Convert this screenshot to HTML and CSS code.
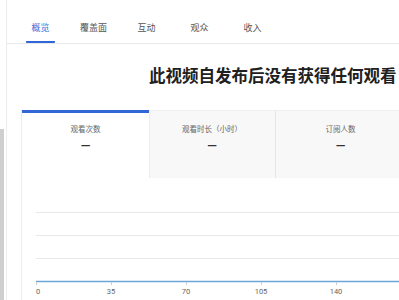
FILE: index.html
```html
<!DOCTYPE html>
<html lang="zh-CN">
<head>
<meta charset="utf-8">
<link rel="stylesheet" href="styles.css">
</head>
<body>
<div class="page">
  <div class="rail">
    <div class="rail-space"></div>
    <div class="rail-thumb"></div>
  </div>
  <div class="main">
    <nav class="tabs">
      <div class="tab active"><span class="tab-label">概览</span></div>
      <div class="tab"><span class="tab-label">覆盖面</span></div>
      <div class="tab"><span class="tab-label">互动</span></div>
      <div class="tab"><span class="tab-label">观众</span></div>
      <div class="tab"><span class="tab-label">收入</span></div>
    </nav>
    <h1 class="headline">此视频自发布后没有获得任何观看</h1>
    <section class="card">
      <div class="metrics">
        <div class="metric selected">
          <div class="metric-label">观看次数</div>
          <div class="metric-value">—</div>
        </div>
        <div class="metric">
          <div class="metric-label">观看时长（小时）</div>
          <div class="metric-value">—</div>
        </div>
        <div class="metric divided">
          <div class="metric-label">订阅人数</div>
          <div class="metric-value">—</div>
        </div>
      </div>
      <svg class="chart" width="380" height="122" viewBox="0 0 380 122">
        <line x1="0" y1="34.5" x2="380" y2="34.5" class="grid"/>
        <line x1="0" y1="57.5" x2="380" y2="57.5" class="grid"/>
        <line x1="0" y1="80.5" x2="380" y2="80.5" class="grid"/>
        <line x1="0" y1="103.5" x2="380" y2="103.5" class="base"/>
        <line x1="0.5" y1="104" x2="0.5" y2="107" class="tick"/>
        <line x1="75.5" y1="104" x2="75.5" y2="107" class="tick"/>
        <line x1="150.5" y1="104" x2="150.5" y2="107" class="tick"/>
        <line x1="225.5" y1="104" x2="225.5" y2="107" class="tick"/>
        <line x1="300.5" y1="104" x2="300.5" y2="107" class="tick"/>
        <text x="0" y="116" class="axis">0</text>
        <text x="75" y="116" class="axis mid">35</text>
        <text x="150" y="116" class="axis mid">70</text>
        <text x="225" y="116" class="axis mid">105</text>
        <text x="300" y="116" class="axis mid">140</text>
      </svg>
    </section>
  </div>
</div>
</body>
</html>
```
FILE: styles.css
```css
html, body {
  margin: 0;
  padding: 0;
  background: #ffffff;
}
body {
  width: 399px;
  height: 300px;
  overflow: hidden;
  font-family: "Noto Sans CJK SC", "Noto Sans", Roboto, sans-serif;
  color: #212121;
}
.page {
  display: flex;
  height: 300px;
}
.rail {
  width: 6px;
  flex: none;
  border-right: 1px solid #ececec;
  display: flex;
  flex-direction: column;
}
.rail-space {
  height: 129px;
  flex: none;
}
.rail-thumb {
  flex: 1;
  width: 4px;
  background: #cfcfcf;
}
.main {
  flex: 1;
  min-width: 0;
  overflow: hidden;
}
.tabs {
  display: flex;
  height: 43px;
  padding-left: 7px;
  border-bottom: 1px solid #e9e9e9;
  box-sizing: content-box;
}
.tab {
  width: 53px;
  display: flex;
  justify-content: center;
  padding-top: 20px;
  box-sizing: border-box;
}
.tab-label {
  display: block;
  height: 23px;
  box-sizing: border-box;
  padding: 0 5px;
  font-size: 9px;
  line-height: 16px;
  color: #555555;
  border-bottom: 2px solid transparent;
}
.tab.active .tab-label {
  color: #3a6fd6;
  border-bottom-color: #2f66d9;
  border-radius: 1px;
}
.headline {
  margin: 21px 0 0 0;
  padding-left: 142px;
  font-size: 16.5px;
  line-height: 20px;
  font-weight: 700;
  white-space: nowrap;
  color: #202020;
}
.card {
  margin: 25px 0 0 14px;
  border-left: 1px solid #ececec;
  height: 190px;
  width: 400px;
}
.metrics {
  display: flex;
  height: 68px;
}
.metric {
  width: 126px;
  flex: none;
  box-sizing: border-box;
  background: #f8f8f8;
  border-top: 1px solid #efefef;
  padding-top: 13px;
  text-align: center;
}
.metric.selected {
  width: 127px;
  background: #ffffff;
  border-top: 3px solid #3367d6;
  padding-top: 11px;
  box-shadow: 1px 0 1px rgba(0,0,0,0.04);
  position: relative;
  z-index: 1;
}
.metric.divided {
  border-left: 1px solid #e6e6e6;
  width: 130px;
}
.metric-label {
  font-size: 7.5px;
  line-height: 10px;
  color: #666666;
}
.metric-value {
  margin-top: 7px;
  font-family: Roboto, "Noto Sans", sans-serif;
  font-size: 12.5px;
  line-height: 10px;
  color: #333333;
  font-weight: 700;
}
.chart {
  display: block;
  margin-left: 14px;
}
.grid {
  stroke: #e8e8e8;
  stroke-width: 1;
}
.base {
  stroke: #6ea6d9;
  stroke-width: 1.6;
}
.tick {
  stroke: #cfcfcf;
  stroke-width: 1;
}
.axis {
  font-family: Roboto, "Noto Sans", sans-serif;
  font-size: 7.5px;
  fill: #666666;
}
.axis.mid {
  text-anchor: middle;
}
```
